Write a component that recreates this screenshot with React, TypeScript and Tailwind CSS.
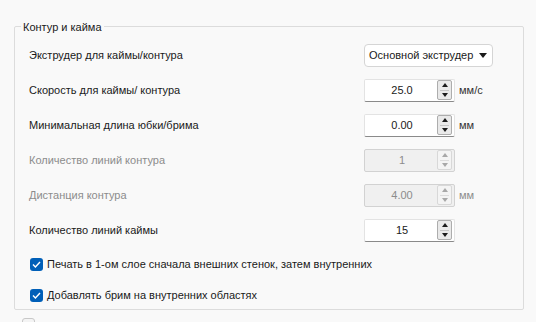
import React from "react";

type SpinProps = { value: string; unit?: string; disabled?: boolean };

function Arrows({ disabled }: { disabled?: boolean }) {
  const fill = disabled ? "#a8a8a8" : "#1a1a1a";
  return (
    <div
      className={
        "flex flex-col w-[15px] h-[20px] mr-[2px] border rounded-[2px] " +
        (disabled ? "border-[#d8d8d8] bg-[#f4f4f4]" : "border-[#adadad] bg-[#e9e9e9]")
      }
    >
      <div className="flex-1 flex items-center justify-center">
        <svg width="6" height="4" viewBox="0 0 6 4">
          <path d="M0 4 L3 0 L6 4 Z" fill={fill} />
        </svg>
      </div>
      <div className={"h-px mx-[2px] " + (disabled ? "bg-[#dcdcdc]" : "bg-[#c4c4c4]")} />
      <div className="flex-1 flex items-center justify-center">
        <svg width="6" height="4" viewBox="0 0 6 4">
          <path d="M0 0 L6 0 L3 4 Z" fill={fill} />
        </svg>
      </div>
    </div>
  );
}

function Spin({ value, unit, disabled }: SpinProps) {
  return (
    <div className="flex items-center">
      <div
        className={
          "flex items-center w-[91px] h-[23px] border rounded-[2px] " +
          (disabled
            ? "bg-[#f0f0f0] border-[#d2d2d2] text-[#8c8c8c]"
            : "bg-white border-[#e3e3e3] border-b-[#8a8a8a] text-[#1a1a1a]")
        }
      >
        <span className="flex-1 text-center pl-[2px]">{value}</span>
        <Arrows disabled={disabled} />
      </div>
      {unit && (
        <span className={"ml-[4px] " + (disabled ? "text-[#8c8c8c]" : "text-[#333333]")}>{unit}</span>
      )}
    </div>
  );
}

function Row({ label, disabled, children }: { label: string; disabled?: boolean; children: React.ReactNode }) {
  return (
    <div className="flex items-center h-[24px]">
      <span className={"w-[335px] " + (disabled ? "text-[#8c8c8c]" : "text-[#1a1a1a]")}>{label}</span>
      {children}
    </div>
  );
}

function Check({ label }: { label: string }) {
  return (
    <div className="flex items-center h-[16px] pl-[1px] gap-[4px]">
      <div className="w-[13px] h-[13px] rounded-[3px] bg-[#005fb8] flex items-center justify-center">
        <svg width="9" height="7" viewBox="0 0 9 7">
          <path d="M1 3.6 L3.4 6 L8 1" fill="none" stroke="white" strokeWidth="1.4" />
        </svg>
      </div>
      <span className="text-[#1a1a1a]">{label}</span>
    </div>
  );
}

export default function App() {
  return (
    <div
      className="w-[536px] h-[322px] bg-[#f9f9f9] overflow-hidden pt-[26px] px-[14px] text-[11px] relative"
      style={{ fontFamily: '"Liberation Sans", Arial, sans-serif' }}
    >
      <div className="relative w-[510px] h-[284px] border border-[#dcdcdc] rounded-[2px] pt-[16px] pl-[14px]">
        <span className="absolute -top-[8px] left-[6px] px-[2px] bg-[#f9f9f9] text-[#1a1a1a]">Контур и кайма</span>
        <div className="flex flex-col gap-[11px]">
          <Row label="Экструдер для каймы/контура">
            <div className="flex items-center justify-between w-[129px] h-[23px] bg-white border border-[#d5d5d5] rounded-[4px] pl-[4px] pr-[5px] text-[#1a1a1a]">
              <span className="whitespace-nowrap">Основной экструдер</span>
              <svg width="8" height="5" viewBox="0 0 8 5">
                <path d="M0 0 L8 0 L4 5 Z" fill="#1a1a1a" />
              </svg>
            </div>
          </Row>
          <Row label="Скорость для каймы/ контура">
            <Spin value="25.0" unit="мм/с" />
          </Row>
          <Row label="Минимальная длина юбки/брима">
            <Spin value="0.00" unit="мм" />
          </Row>
          <Row label="Количество линий контура" disabled>
            <Spin value="1" disabled />
          </Row>
          <Row label="Дистанция контура" disabled>
            <Spin value="4.00" unit="мм" disabled />
          </Row>
          <Row label="Количество линий каймы">
            <Spin value="15" />
          </Row>
        </div>
        <div className="flex flex-col gap-[15px] mt-[14px]">
          <Check label="Печать в 1-ом слое сначала внешних стенок, затем внутренних" />
          <Check label="Добавлять брим на внутренних областях" />
        </div>
      </div>
      <div className="ml-[8px] mt-[8px] w-[13px] h-[13px] rounded-[3px] border border-[#c8c8c8] bg-[#f4f4f4]" />
    </div>
  );
}
